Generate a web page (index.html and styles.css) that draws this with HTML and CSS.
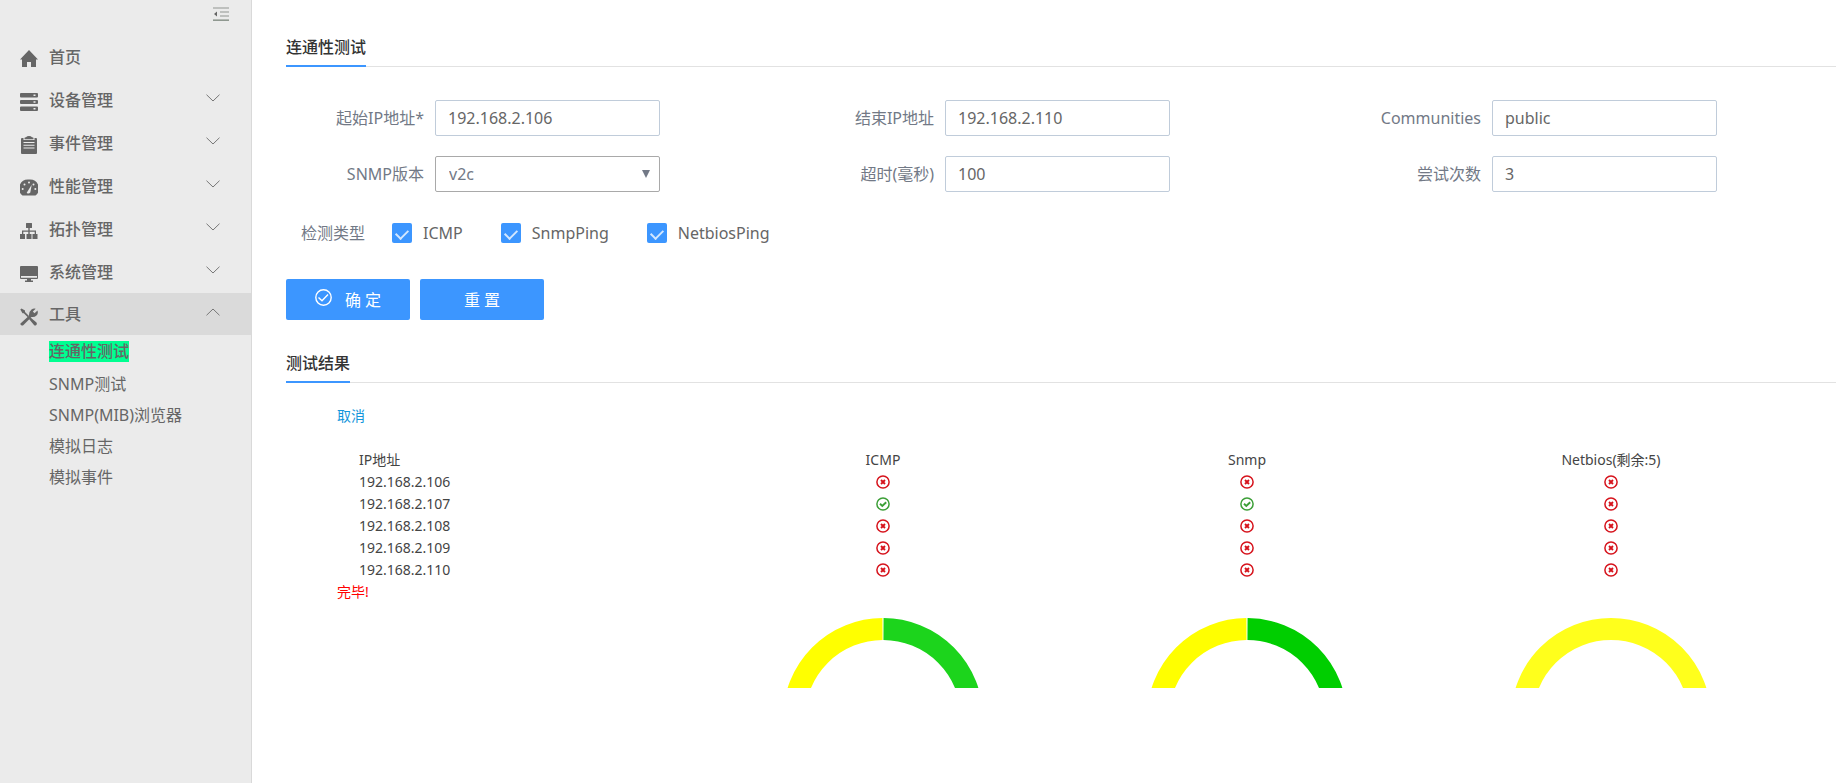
FILE: index.html
```
<!DOCTYPE html>
<html lang="zh-CN">
<head>
<meta charset="utf-8">
<title>连通性测试</title>
<link rel="stylesheet" href="styles.css">
</head>
<body>
<svg class="sprite" aria-hidden="true">
  <symbol id="down" viewBox="0 0 14 8"><path d="M0.500 0.700L7 7L13.500 0.700" fill="none" stroke="currentColor"/></symbol>
  <symbol id="fail" viewBox="0 0 14 14"><circle cx="7" cy="7" r="6.100" fill="none" stroke="currentColor" stroke-width="1.500"/><path d="M5 5L9 9M9 5L5 9" stroke="currentColor" stroke-width="1.900"/></symbol>
  <symbol id="pass" viewBox="0 0 14 14"><circle cx="7" cy="7" r="6.100" fill="none" stroke="currentColor" stroke-width="1.500"/><path d="M4 6.800L6.300 9L10.200 5.200" fill="none" stroke="currentColor" stroke-width="1.900"/></symbol>
</svg>
<div class="app">
  <aside class="sidebar">
    <button class="collapse" type="button" aria-label="收起菜单">
      <svg width="16" height="14" viewBox="0 0 16 14"><path d="M0 1H16M7 5H16M7 9H16" stroke="#b0b2b0" stroke-width="1.400"/><path d="M0 13.200H16" stroke="#8f9890" stroke-width="1.600"/><path d="M4 4.500V9.500L1 7Z" fill="#666"/></svg>
    </button>
    <nav class="menu">
      <a class="item" href="#home">
        <svg class="icon" viewBox="0 0 18 18"><path d="M9 0L18 9.500H16V17H11V12H7V17H2V9.500H0Z"/></svg>
        <span class="name">首页</span>
      </a>
      <a class="item" href="#device">
        <svg class="icon" viewBox="0 0 18 18"><path fill-rule="evenodd" d="M1 0H17Q18 0 18 1V3.500Q18 4.500 17 4.500H1Q0 4.500 0 3.500V1Q0 0 1 0ZM13.500 1.500V3H15.500V1.500ZM1 7H17Q18 7 18 8V10Q18 11 17 11H1Q0 11 0 10V8Q0 7 1 7ZM13.500 8.200V9.800H15.500V8.200ZM1 13.500H17Q18 13.500 18 14.500V17Q18 18 17 18H1Q0 18 0 17V14.500Q0 13.500 1 13.500ZM13.500 15V16.500H15.500V15Z"/></svg>
        <span class="name">设备管理</span>
        <svg class="arrow"><use href="#down"/></svg>
      </a>
      <a class="item" href="#event">
        <svg class="icon" viewBox="0 0 18 18"><path fill-rule="evenodd" d="M2 2H3.500V4H14.500V2H16Q17 2 17 3V17Q17 18 16 18H2Q1 18 1 17V3Q1 2 2 2ZM3.500 6V7H14.500V6ZM3.500 8.700V9.700H14.500V8.700ZM3.500 11.400V12.400H14.500V11.400Z"/><path d="M4.500 3.300V2Q4.500 1.400 6 1.300Q7 0 9 0T12 1.300Q13.500 1.400 13.500 2V3.300Z"/></svg>
        <span class="name">事件管理</span>
        <svg class="arrow"><use href="#down"/></svg>
      </a>
      <a class="item" href="#performance">
        <svg class="icon" viewBox="0 0 18 18"><path d="M9 0.500A9 9 0 0 1 15.500 16.500H2.500A9 9 0 0 1 9 0.500Z"/><g fill="#ebebeb"><circle cx="9" cy="3.500" r="1"/><circle cx="4.500" cy="5.500" r="1"/><circle cx="2.700" cy="10" r="1"/><circle cx="13.500" cy="5.500" r="1"/><circle cx="15.300" cy="10" r="1"/><path d="M11.700 5.800L10.300 13.500Q8.500 15.500 6.700 13.700Z"/></g></svg>
        <span class="name">性能管理</span>
        <svg class="arrow"><use href="#down"/></svg>
      </a>
      <a class="item" href="#topology">
        <svg class="icon" viewBox="0 0 18 18"><path d="M6.500 1H11.500Q12 1 12 1.500V5.500Q12 6 11.500 6H9.700V8.500H16V12H17.500V17H12.500V12H14.700V9.800H9.700V12H11.500V17H6.500V12H8.300V9.800H3.300V12H5V17H0V12H2V8.500H8.300V6H6.500Q6 6 6 5.500V1.500Q6 1 6.500 1Z"/></svg>
        <span class="name">拓扑管理</span>
        <svg class="arrow"><use href="#down"/></svg>
      </a>
      <a class="item" href="#system">
        <svg class="icon" viewBox="0 0 18 18"><path fill-rule="evenodd" d="M1 1H17Q18 1 18 2V13Q18 14 17 14H11V15.500H13V17H5V15.500H7V14H1Q0 14 0 13V2Q0 1 1 1ZM1 11V12.800H17V11Z"/></svg>
        <span class="name">系统管理</span>
        <svg class="arrow"><use href="#down"/></svg>
      </a>
      <a class="item open" href="#tools">
        <svg class="icon" viewBox="0 0 18 18"><path d="M0.300 1.500L1.500 0.500L5 2.500V4L9 8L7.800 9.200L3.800 5.200H2.500ZM10.500 9.500L16.500 14.500Q17.500 16 16.300 17T14 17L9 11Z"/><path d="M1 15L9 7.700Q8.700 3.800 11.500 1.500Q13.500 0 15.700 0.700L12.800 3.500L14.500 5.200L17.500 2.500Q18.500 5.500 16.500 7.500Q14.500 9.500 11.500 9L3.500 17Q2.300 18 1 17T1 15Z"/></svg>
        <span class="name">工具</span>
        <svg class="arrow up"><use href="#down"/></svg>
      </a>
      <div class="submenu">
        <a class="sub current" href="#connectivity"><span>连通性测试</span></a>
        <a class="sub" href="#snmp">SNMP测试</a>
        <a class="sub" href="#mib">SNMP(MIB)浏览器</a>
        <a class="sub" href="#mock-log">模拟日志</a>
        <a class="sub" href="#mock-event">模拟事件</a>
      </div>
    </nav>
  </aside>
  <main class="main">
    <header class="section-head"><h2>连通性测试</h2></header>
    <form class="form">
      <div class="fields">
        <div class="field"><label for="start">起始IP地址*</label><input id="start" type="text" value="192.168.2.106"></div>
        <div class="field"><label for="end">结束IP地址</label><input id="end" type="text" value="192.168.2.110"></div>
        <div class="field"><label for="community">Communities</label><input id="community" type="text" value="public"></div>
        <div class="field"><label for="version">SNMP版本</label><div class="select"><select id="version"><option>v2c</option></select></div></div>
        <div class="field"><label for="timeout">超时(毫秒)</label><input id="timeout" type="text" value="100"></div>
        <div class="field"><label for="retries">尝试次数</label><input id="retries" type="text" value="3"></div>
      </div>
      <div class="types" role="group" aria-labelledby="types-label">
        <span class="types-label" id="types-label">检测类型</span>
        <label class="check"><input type="checkbox" checked>ICMP</label>
        <label class="check"><input type="checkbox" checked>SnmpPing</label>
        <label class="check"><input type="checkbox" checked>NetbiosPing</label>
      </div>
      <div class="actions">
        <button class="btn" type="button"><svg width="17" height="17" viewBox="0 0 17 17" fill="none" stroke="#fff" stroke-width="1.400"><circle cx="8.500" cy="8.500" r="7.700"/><path d="M3.500 8.500L7 11.800L13 5.500"/></svg>确 定</button>
        <button class="btn" type="button">重 置</button>
      </div>
    </form>
    <header class="section-head"><h2>测试结果</h2></header>
    <section class="results">
      <a class="cancel" href="#cancel">取消</a>
      <table class="table">
        <thead><tr><th>IP地址</th><th>ICMP</th><th>Snmp</th><th>Netbios(剩余:5)</th></tr></thead>
        <tbody>
          <tr><td>192.168.2.106</td><td><svg class="fail"><use href="#fail"/></svg></td><td><svg class="fail"><use href="#fail"/></svg></td><td><svg class="fail"><use href="#fail"/></svg></td></tr>
          <tr><td>192.168.2.107</td><td><svg class="pass"><use href="#pass"/></svg></td><td><svg class="pass"><use href="#pass"/></svg></td><td><svg class="fail"><use href="#fail"/></svg></td></tr>
          <tr><td>192.168.2.108</td><td><svg class="fail"><use href="#fail"/></svg></td><td><svg class="fail"><use href="#fail"/></svg></td><td><svg class="fail"><use href="#fail"/></svg></td></tr>
          <tr><td>192.168.2.109</td><td><svg class="fail"><use href="#fail"/></svg></td><td><svg class="fail"><use href="#fail"/></svg></td><td><svg class="fail"><use href="#fail"/></svg></td></tr>
          <tr><td>192.168.2.110</td><td><svg class="fail"><use href="#fail"/></svg></td><td><svg class="fail"><use href="#fail"/></svg></td><td><svg class="fail"><use href="#fail"/></svg></td></tr>
        </tbody>
      </table>
      <p class="done">完毕!</p>
      <div class="gauges">
        <span></span>
        <svg viewBox="0 0 200 70" fill="none" stroke-width="22"><path d="M11 100A89 89 0 0 1 99.500 11" stroke="#ff0"/><path d="M100.500 11A89 89 0 0 1 189 100" stroke="#1cd41c"/></svg>
        <svg viewBox="0 0 200 70" fill="none" stroke-width="22"><path d="M11 100A89 89 0 0 1 99.500 11" stroke="#ff0"/><path d="M100.500 11A89 89 0 0 1 189 100" stroke="#00ce00"/></svg>
        <svg viewBox="0 0 200 70" fill="none" stroke-width="22"><path d="M11 100A89 89 0 0 1 189 100" stroke="#ffff1c"/></svg>
      </div>
    </section>
  </main>
</div>
</body>
</html>
```
FILE: styles.css
```
* { box-sizing: border-box; }

body {
  margin: 0;
  background: #fff;
  color: #666;
  font: 16px/24px "Noto Sans", "Noto Sans CJK SC", sans-serif;
}

a { color: inherit; text-decoration: none; }
button, input, select { font: inherit; color: inherit; }
.sprite { display: none; }

.app { display: flex; min-height: 100vh; }

/* Sidebar */
.sidebar {
  flex: none;
  width: 252px;
  background: #ebebeb;
  border-right: 1px solid #d9d9d9;
}
.collapse {
  display: block;
  margin: 0 22px 0 auto;
  padding: 7px 0 0;
  height: 35px;
  border: 0;
  background: none;
}
.collapse svg { display: block; margin-bottom: 14px; }
.item {
  display: flex;
  align-items: center;
  height: 43px;
  padding: 0 31px 0 20px;
  font-weight: 500;
}
.item.open { height: 42px; background: #dadada; }
.icon { width: 18px; height: 18px; margin: 5px 11px 0 0; fill: #666; }
.name { flex: 1; }
.arrow { width: 14px; height: 8px; margin-bottom: 4px; color: #777; }
.arrow.up { transform: rotate(180deg); }
.submenu { display: flex; flex-direction: column; padding-top: 1px; }
.sub { height: 31px; padding-left: 49px; line-height: 31px; }
.current { height: 33px; font-weight: 500; }
.current span {
  display: inline-block;
  line-height: 21px;
  background: #00ff91;
}

/* Content */
.main { flex: 1; min-width: 0; padding: 26px 0 0 34px; }
.section-head { display: flex; border-bottom: 1px solid #e2e2e2; }
h2 {
  margin: 0 0 -1px;
  padding: 9px 0 6px;
  border-bottom: 2px solid #3c96ff;
  color: #333;
  font-size: 16px;
  font-weight: 500;
}

.form { padding: 33px 0 22px; }
.fields {
  display: grid;
  grid-template-columns: 510fr 547fr 493fr;
  row-gap: 20px;
}
.field { display: flex; align-items: center; }
.field label { width: 138px; margin-right: 11px; text-align: right; color: #727986; }
.field input, .field select {
  width: 225px;
  height: 36px;
  padding: 0 12px;
  border: 1px solid #c0ccda;
  border-radius: 2px;
  background: #fff;
  outline: 0;
}
.select { position: relative; height: 36px; }
.field select {
  appearance: none;
  border-color: #a9a9a9;
  padding: 0 13px;
  color: #727986;
}
.select::after {
  content: "";
  position: absolute;
  top: 14px;
  right: 10px;
  border: 4px solid transparent;
  border-top: 8px solid #727986;
  border-bottom: 0;
  pointer-events: none;
}

.types { display: flex; align-items: center; margin-top: 29px; padding-left: 15px; }
.types-label { margin-right: 27px; color: #727986; }
.check { display: flex; align-items: center; gap: 11px; margin-right: 38px; }
.check input {
  appearance: none;
  display: flex;
  justify-content: center;
  width: 20px;
  height: 20px;
  margin: 0;
  border-radius: 2px;
  background: #3c96ff;
}
.check input::after {
  content: "";
  width: 10px;
  height: 6px;
  margin-top: 6px;
  border: solid #d3e7ff;
  border-width: 0 0 2px 2px;
  transform: rotate(-45deg);
}

.actions { display: flex; gap: 10px; margin-top: 34px; }
.btn {
  display: flex;
  align-items: center;
  justify-content: center;
  gap: 13px;
  width: 124px;
  height: 41px;
  padding: 0;
  border: 0;
  border-radius: 2px;
  background: #3c96ff;
  color: #fff;
}
.btn svg { margin-bottom: 4px; }

/* Results */
.results {
  padding: 22px 43px 0 51px;
  color: #444;
  font-size: 14px;
  line-height: 22px;
}
.cancel { display: block; width: max-content; color: #1296db; }
.table {
  width: 100%;
  margin-top: 22px;
  border-collapse: collapse;
  table-layout: fixed;
}
.table th, .table td { height: 22px; padding: 0; font-weight: 400; text-align: center; }
.table th:first-child, .table td:first-child { padding-left: 22px; text-align: left; }
.table svg { display: block; width: 14px; height: 14px; margin: 0 auto; }
.fail { color: #d6131c; }
.pass { color: #3c9f37; }
.done { margin: 0; color: #f00; }
.gauges {
  display: grid;
  grid-template-columns: repeat(4, 1fr);
  justify-items: center;
  margin-top: 15px;
}
.gauges svg { width: 200px; height: 70px; }
```
